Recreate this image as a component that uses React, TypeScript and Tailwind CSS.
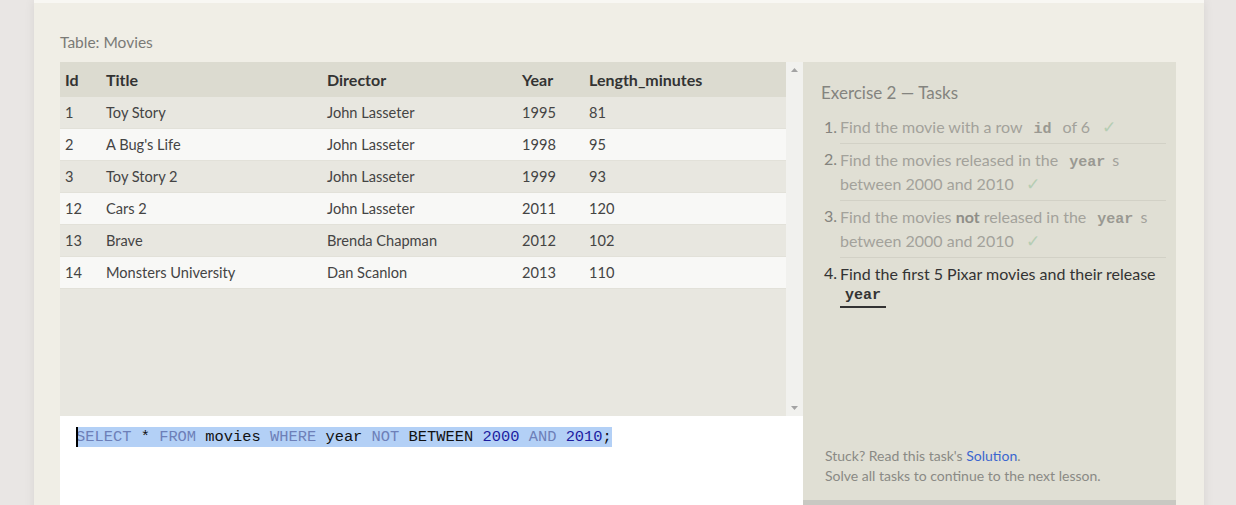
import React from "react";

type Movie = {
  id: number;
  title: string;
  director: string;
  year: number;
  length: number;
};

const movies: Movie[] = [
  { id: 1, title: "Toy Story", director: "John Lasseter", year: 1995, length: 81 },
  { id: 2, title: "A Bug's Life", director: "John Lasseter", year: 1998, length: 95 },
  { id: 3, title: "Toy Story 2", director: "John Lasseter", year: 1999, length: 93 },
  { id: 12, title: "Cars 2", director: "John Lasseter", year: 2011, length: 120 },
  { id: 13, title: "Brave", director: "Brenda Chapman", year: 2012, length: 102 },
  { id: 14, title: "Monsters University", director: "Dan Scanlon", year: 2013, length: 110 },
];

const cols = "grid grid-cols-[41px_221px_195px_67px_1fr] pl-[5px] items-center";

const Code = ({ children }: { children: React.ReactNode }) => (
  <code className="px-[7px] leading-none font-bold text-[15px] text-[#9a9992] font-['Liberation_Mono',monospace]">
    {children}
  </code>
);

const Check = () => <span className="ml-[12px] text-[17px] leading-none text-[#b5cdb3]">✓</span>;

const Task = ({
  n,
  done,
  first,
  children,
}: {
  n: number;
  done?: boolean;
  first?: boolean;
  children: React.ReactNode;
}) => (
  <li className="flex">
    <span className={`w-[19px] shrink-0 pt-[4px] pl-[3px] ${done ? "text-[#85847e]" : "text-[#333]"}`}>
      {n}.
    </span>
    <div
      className={`flex-1 py-[4px] ${first ? "" : "border-t border-[#d2d1c6]"} ${
        done ? "text-[#a3a29b]" : "text-[#333]"
      }`}
    >
      {children}
    </div>
  </li>
);

const Keyword = ({ children }: { children: React.ReactNode }) => (
  <span className="text-[#6d7fb8]">{children}</span>
);
const Num = ({ children }: { children: React.ReactNode }) => (
  <span className="text-[#1c1ca0]">{children}</span>
);

export default function App() {
  return (
    <div className="h-[505px] overflow-hidden bg-[#e9e6e4] pl-[34px] pr-[32px] font-['Lato','Noto_Sans',sans-serif]">
      <div className="h-[560px] bg-[#f0eee6] border-t-[3px] border-[#f8f7f3] shadow-[0_0_10px_rgba(0,0,0,0.08)] pt-[29px] pl-[26px] pr-[27px]">
        <div className="text-[15.5px] leading-[20px] text-[#7a7a76] mb-[10px]">Table: Movies</div>
        <div className="flex h-[480px]">
          <div className="w-[743px] flex flex-col">
            <div className="flex h-[354px] shrink-0">
              <div className="flex-1 bg-[#e8e7e0] text-[14.6px] text-[#444]">
                <div className={`${cols} h-[35px] bg-[#dcdbd0] font-bold text-[#333] text-[16px]`}>
                  <span>Id</span>
                  <span>Title</span>
                  <span>Director</span>
                  <span>Year</span>
                  <span>Length_minutes</span>
                </div>
                {movies.map((m, i) => (
                  <div
                    key={m.id}
                    className={`${cols} h-[32px] border-b border-[#e2e1d9] ${
                      i % 2 === 0 ? "bg-[#e8e7e0]" : "bg-[#f8f8f6]"
                    }`}
                  >
                    <span>{m.id}</span>
                    <span>{m.title}</span>
                    <span>{m.director}</span>
                    <span>{m.year}</span>
                    <span>{m.length}</span>
                  </div>
                ))}
              </div>
              <div className="w-[17px] bg-[#f1f1ee] flex flex-col items-center justify-between py-[6px]">
                <svg width="7" height="4" viewBox="0 0 7 4">
                  <path d="M0 4 L3.5 0 L7 4 Z" fill="#a3a3a3" />
                </svg>
                <svg width="7" height="4" viewBox="0 0 7 4">
                  <path d="M0 0 L3.5 4 L7 0 Z" fill="#a3a3a3" />
                </svg>
              </div>
            </div>
            <div className="flex-1 bg-white pt-[11px] pl-[16px]">
              <div className="flex items-center text-[15.4px] leading-[20px] font-['Liberation_Mono',monospace] text-[#111]">
                <span className="w-[2px] h-[20px] bg-black -mr-[2px] relative z-10" />
                <span className="bg-[#b3d0f6] whitespace-pre">
                  <Keyword>SELECT</Keyword> * <Keyword>FROM</Keyword> movies <Keyword>WHERE</Keyword> year{" "}
                  <Keyword>NOT</Keyword> BETWEEN <Num>2000</Num> <Keyword>AND</Keyword> <Num>2010</Num>;
                </span>
              </div>
            </div>
          </div>
          <div className="w-[373px] flex flex-col">
            <div className="h-[438px] shrink-0 bg-[#e0dfd4] flex flex-col pt-[20px] pl-[18px] pr-[10px] pb-[14px]">
              <h2 className="text-[17px] leading-[22px] text-[#84847f] mb-[7px]">Exercise 2 — Tasks</h2>
              <ol className="text-[16px] leading-[24px]">
                <Task n={1} done first>
                  Find the movie with a row <Code>id</Code> of 6
                  <Check />
                </Task>
                <Task n={2} done>
                  Find the movies released in the <Code>year</Code>s between 2000 and 2010
                  <Check />
                </Task>
                <Task n={3} done>
                  Find the movies <b className="text-[#8f8e88]">not</b> released in the <Code>year</Code>s between
                  2000 and 2010
                  <Check />
                </Task>
                <Task n={4}>
                  Find the first 5 Pixar movies and their release{" "}
                  <code className="inline-block align-top px-[5px] leading-[20px] border-b-2 border-[#333] font-bold text-[15px] text-[#333] font-['Liberation_Mono',monospace]">
                    year
                  </code>
                </Task>
              </ol>
              <div className="mt-auto pl-[4px] text-[14px] leading-[20px] text-[#8a8a85]">
                <p>
                  Stuck? Read this task's <a className="text-[#3b66cf]">Solution</a>.
                </p>
                <p>Solve all tasks to continue to the next lesson.</p>
              </div>
            </div>
            <div className="flex-1 bg-[#c8c8c2]" />
          </div>
        </div>
      </div>
    </div>
  );
}
